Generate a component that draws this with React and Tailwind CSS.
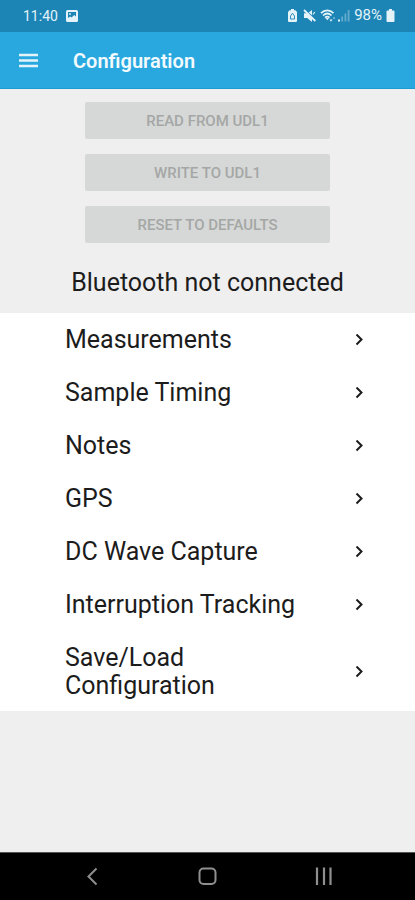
import React from 'react';

const actions = ['Read from UDL1', 'Write to UDL1', 'Reset to defaults'];

const sections = [
  'Measurements',
  'Sample Timing',
  'Notes',
  'GPS',
  'DC Wave Capture',
  'Interruption Tracking',
  'Save/Load Configuration',
];

function StatusBar() {
  return (
    <div className="flex h-8 items-center justify-between bg-[#1c85b5] pl-[23px] pr-5 text-sm text-[#e4f3fa]">
      <div className="flex items-center gap-2">
        <span>11:40</span>
        <svg className="h-3 w-3" viewBox="0 0 12 12" aria-hidden="true">
          <rect width="12" height="12" rx="1.5" fill="currentColor" />
          <path d="M2 2h8v4.600L8.200 5 5.600 7.600 4.200 6.400 2 8z" fill="#1c85b5" />
          <circle cx="4" cy="4" r="0.9" fill="currentColor" />
        </svg>
      </div>
      <div className="flex items-center">
        <svg className="mr-1.5 h-[13px] w-[9px]" viewBox="0 0 9 13" aria-hidden="true">
          <path d="M3 0h3v1.300h1.500L9 3v9a1 1 0 0 1-1 1H1a1 1 0 0 1-1-1V3l1.500-1.700H3z" fill="currentColor" />
          <path d="M4.500 4.200 6.500 7v3H2.500V7z" fill="none" stroke="#1c85b5" strokeWidth="0.9" />
        </svg>
        <svg className="mr-1 h-[13px] w-[13px]" viewBox="0 0 13 13" aria-hidden="true">
          <path d="M1 4.200h3L9 9v4L4.200 9H1z" fill="currentColor" />
          <path d="M5.800 3.400 9 1v5.300z" fill="currentColor" />
          <path d="m10 5.500 1.800-2.500" stroke="currentColor" strokeWidth="1.200" />
          <path d="M1 1 12.300 12" stroke="currentColor" strokeWidth="1.800" />
        </svg>
        <svg className="mr-0.5 h-[13px] w-4" viewBox="0 0 16 13" aria-hidden="true">
          <g fill="none" stroke="currentColor" strokeWidth="1.700">
            <path d="M1 4.200C4.500.5 10 .5 13.500 4.200" />
            <path d="M3 6.500c2.600-2.400 6-2.400 8.500 0" />
            <path d="M5 8.600c1.400-1.200 3.200-1.200 4.600 0" />
          </g>
          <path d="M5.500 9h3.600L7.300 11.200z" fill="currentColor" />
          <path d="M11 12.800 9.400 10.500h3.200z" fill="currentColor" />
          <path d="m14 7.500 1.400 2.300h-2.800z" fill="currentColor" opacity="0.5" />
        </svg>
        <svg className="mr-1 h-[13px] w-3" viewBox="0 0 12 13" aria-hidden="true">
          <rect x="0" y="10.500" width="2" height="2" fill="currentColor" />
          <g fill="currentColor" opacity="0.350">
            <rect x="3.300" y="7.500" width="1.800" height="5" />
            <rect x="6.500" y="4.500" width="1.800" height="8" />
            <rect x="9.700" y="1" width="1.800" height="11.500" />
          </g>
        </svg>
        <span className="text-[15px]">98%</span>
        <svg className="ml-1 h-[13px] w-[9px]" viewBox="0 0 8 13" aria-hidden="true">
          <path d="M2.500 0h3v1.500H7a1 1 0 0 1 1 1V12a1 1 0 0 1-1 1H1a1 1 0 0 1-1-1V2.500a1 1 0 0 1 1-1h1.500z" fill="currentColor" />
        </svg>
      </div>
    </div>
  );
}

function Header() {
  return (
    <header className="flex h-[57px] items-center gap-[34px] border-b border-[#1b9ad3] bg-[#29a8e0] px-[18px] pt-0.5">
      <button type="button" aria-label="Open menu" className="text-[#e4f3fa]">
        <svg className="h-5 w-[21px]" viewBox="0 0 21 20" aria-hidden="true">
          <path d="M1 4h19M1 9.500h19M1 15h19" stroke="currentColor" strokeWidth="2.500" />
        </svg>
      </button>
      <h1 className="text-xl font-semibold text-[#f2fafd]">Configuration</h1>
    </header>
  );
}

function NavBar() {
  return (
    <nav className="flex h-12 items-center justify-around border-t border-[#555555] bg-black px-[34px] text-[#8f8f8f]">
      <button type="button" aria-label="Back">
        <svg className="h-5 w-5" viewBox="0 0 20 20" fill="none" aria-hidden="true">
          <path d="M14.500 1.500 6.500 9.500l8 8" stroke="currentColor" strokeWidth="2" />
        </svg>
      </button>
      <button type="button" aria-label="Home">
        <svg className="h-5 w-5" viewBox="0 0 20 20" fill="none" aria-hidden="true">
          <rect x="2.500" y="1.500" width="16" height="15.500" rx="4" stroke="currentColor" strokeWidth="2" />
        </svg>
      </button>
      <button type="button" aria-label="Recent apps">
        <svg className="h-5 w-5" viewBox="0 0 20 20" fill="none" aria-hidden="true">
          <path d="M4 .5v17.500M11 .5v17.500M17.500 .5v17.500" stroke="currentColor" strokeWidth="2.200" />
        </svg>
      </button>
    </nav>
  );
}

export default function App() {
  return (
    <div className="flex min-h-screen flex-col bg-[#efefef] font-[Roboto,sans-serif]">
      <StatusBar />
      <Header />

      <main className="flex-1">
        <div className="flex flex-col items-center gap-[15px] px-[85px] pt-[13px]">
          {actions.map((label) => (
            <button
              key={label}
              type="button"
              disabled
              className="h-[37px] w-full rounded-xs bg-[#d6d8d7] pt-0.5 text-[15px] font-medium uppercase text-[#a5a7a6]"
            >
              {label}
            </button>
          ))}
        </div>

        <p className="pt-[26px] pb-4 text-center text-[25px] leading-7 text-[#1c1c1c]">Bluetooth not connected</p>

        <ul className="grid gap-px bg-white">
          {sections.map((name) => (
            <li key={name}>
              <a href="#" className="flex items-center justify-between pt-[13px] pb-[11px] pr-[50px] pl-[65px] text-[#1c1c1c]">
                <span className="max-w-60 text-[25px] leading-7">{name}</span>
                <svg className="h-3 w-3" viewBox="0 0 12 12" fill="none" aria-hidden="true">
                  <path d="M3.500 .5 8.500 5.500l-5 5" stroke="currentColor" strokeWidth="2" />
                </svg>
              </a>
            </li>
          ))}
        </ul>
      </main>

      <NavBar />
    </div>
  );
}
